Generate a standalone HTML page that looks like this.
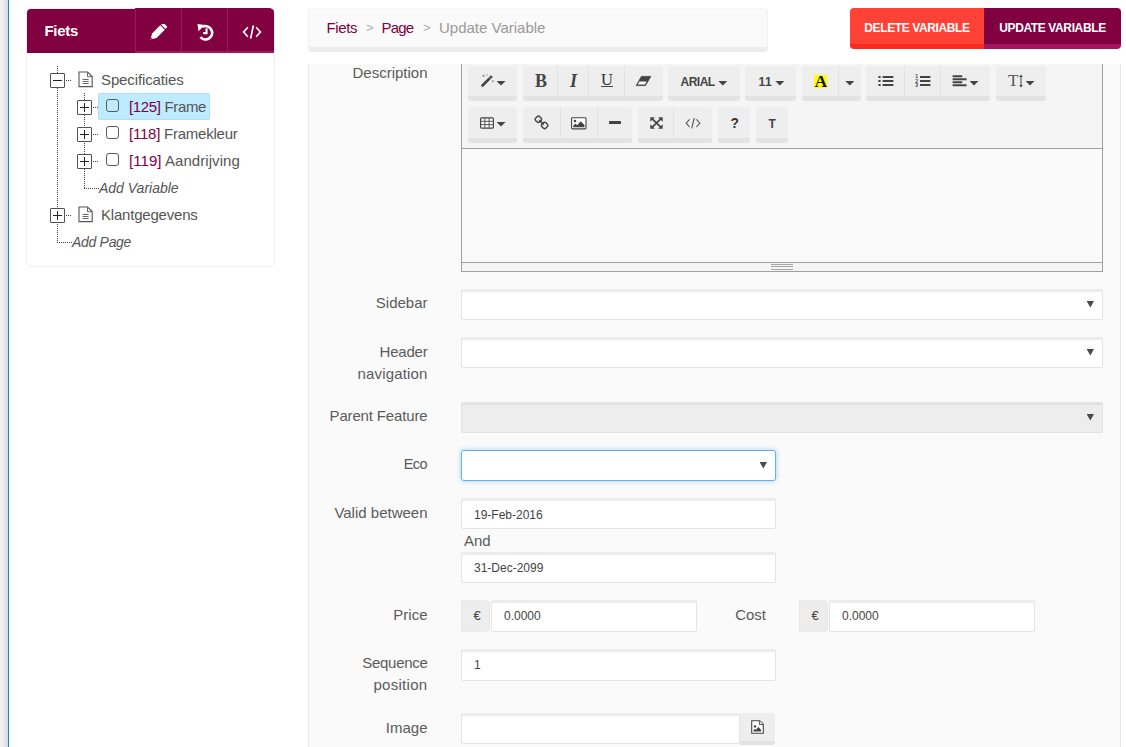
<!DOCTYPE html>
<html lang="en">
<head>
<meta charset="utf-8">
<title>Update Variable</title>
<style>
*{box-sizing:border-box;margin:0;padding:0}
html,body{width:1126px;height:747px;overflow:hidden;background:#fff}
body{font-family:"Liberation Sans",sans-serif;font-size:15px;color:#555;position:relative}
.abs{position:absolute}
#strip{left:0;top:0;width:8px;height:747px;background:linear-gradient(to right,#f2f2f2 0px,#f2f2f2 1px,#f0f0f0 1px,#f0f0f0 2px,#eeeeee 2px,#eeeeee 3px,#ebebeb 3px,#ebebeb 4px,#e6e6e6 4px,#e6e6e6 5px,#e1e1e1 5px,#e1e1e1 6px,#dddddd 6px,#dddddd 7px,#dedcda 7px,#dedcda 8px)}
#blue{left:8px;top:0;width:1px;height:747px;background:#1c83d8}

/* sidebar */
#side{left:26px;top:8px;width:249px;height:259px;background:#fff;border:1px solid #efefef;border-radius:5px}
#sidehead{left:27px;top:9px;width:247px;height:44px;background:#800040;border-radius:4px 4px 0 0}
#sidehead b{position:absolute;left:17.5px;top:13px;font-size:15px;color:#fff;letter-spacing:-0.3px}
.hbtn{top:8px;height:45px;width:47px;background:#800040;border:1px solid #a3155f;border-top-color:#800040;border-bottom-width:2px;border-right-width:0}
.hbtn svg{position:absolute}

/* tree */
.t{position:absolute;white-space:nowrap;font-size:15px;line-height:18px;color:#555}
.t i{font-style:italic}
.red{color:#800040}
.box{position:absolute;width:15px;height:15px;border:1px solid #505050;border-radius:1px;background:#fff}
.box:before{content:"";position:absolute;left:2px;top:6px;width:9px;height:1px;background:#222}
.box.plus:after{content:"";position:absolute;left:6px;top:2px;width:1px;height:9px;background:#222}
.vd{position:absolute;width:1px;background:repeating-linear-gradient(to bottom,#444 0,#444 1px,transparent 1px,transparent 2px)}
.hd{position:absolute;height:1px;background:repeating-linear-gradient(to right,#444 0,#444 1px,transparent 1px,transparent 2px)}
.cb{position:absolute;width:13px;height:13px;border:1px solid #5a5a5a;border-radius:3px;background:transparent}
#hl{left:98px;top:93px;width:112px;height:27px;background:#beebff;border:1px solid #aee0f5;border-radius:2px}

/* top */
#crumb{left:308px;top:8px;width:460px;height:44px;background:#fafafa;border:1px solid #f1f1f1;border-top-color:#f6f6f6;border-bottom:5px solid #ececec;border-radius:4px}
#crumb span{position:absolute;top:10px;margin-left:-1px;font-size:15px;line-height:18px;white-space:nowrap}
#del{left:850px;top:8px;width:134px;height:41px;background:#ff4136;border-bottom:5px solid #ff2a1b;border-radius:4px 0 0 4px}
#upd{left:984px;top:8px;width:137px;height:41px;background:#800040;border-bottom:5px solid #a8145f;border-radius:0 4px 4px 0}
.tb{color:#fff;font-weight:bold;font-size:12px;text-align:center;line-height:41px;letter-spacing:-0.38px;white-space:nowrap}

/* main */
#main{left:308px;top:64px;width:813px;height:700px;background:#fafafa;border:1px solid #ebebeb;border-top:0}
.lbl{position:absolute;left:317.5px;width:110px;text-align:right;font-size:15px;line-height:22px;color:#5a5a5a}
.inp{position:absolute;height:31px;background:#fff;border:1px solid #e4e4e4;border-top:3px solid #ececec;border-radius:2px;font-size:12px;color:#444;padding:6px 0 0 12px;line-height:17px}
.sel:after{content:"";position:absolute;right:8px;top:9px;width:7.4px;height:6.6px;background:#4a4a4a;clip-path:polygon(0 0,100% 0,50% 100%)}
.sel.eco:after{top:11px}
.addon{position:absolute;height:32px;background:#ededed;border:1px solid #e9e9e9;border-radius:0 4px 4px 0;font-size:13px;color:#444;text-align:center;line-height:29px;padding-left:3px}

/* editor */
#ed{left:461px;top:64px;width:642px;height:208px;border:1px solid #a0a0a0;border-top:0;background:#fafafa}
#edbar{left:462px;top:64px;width:640px;height:85px;background:#f5f5f5;border-bottom:1px solid #a0a0a0}
#edfoot{left:462px;top:262px;width:640px;height:9px;background:#f5f5f5;border-top:1px solid #a0a0a0}
.g{position:absolute;background:#eee;border-bottom:5px solid #e3e3e3;border-radius:3px}
.r1{top:66px;height:35px}
.r2{top:107px;height:36px}
.g s{position:absolute;top:0;width:1px;height:31px;background:#e2e2e2;text-decoration:none}
.g svg,.g span{position:absolute}
.car{width:9px;height:4.6px;background:#444;clip-path:polygon(0 0,100% 0,50% 100%)}
</style>
</head>
<body>
<div id="strip" class="abs"></div>
<div id="blue" class="abs"></div>

<!-- SIDEBAR -->
<div id="side" class="abs"></div>
<div id="sidehead" class="abs"><b>Fiets</b></div>
<div class="abs hbtn" style="left:135px"><svg style="left:13px;top:15px" width="18" height="17" viewBox="0 0 18 17"><g transform="rotate(45 8.5 8.5)"><rect x="5.3" y="-2.6" width="6.4" height="3" rx="1" fill="#fff"/><path d="M5.3 1.4h6.4v11.6l-3.2 5.4l-3.2-5.4z" fill="#fff"/><path d="M7.5 16.4h2l-1 1.8z" fill="#800040"/></g></svg></div>
<div class="abs hbtn" style="left:181px"><svg style="left:13.5px;top:12.5px" width="20" height="20" viewBox="0 0 19 19"><path d="M6.2 4.6A6.3 6.3 0 1 1 4.2 14.4" fill="none" stroke="#fff" stroke-width="2.6"/><path d="M1.4 1.8l7 1l-6 6z" fill="#fff"/><path d="M10 6v4.6h-3.2" fill="none" stroke="#fff" stroke-width="2"/></svg></div>
<div class="abs hbtn" style="left:227px;border-radius:0 5px 0 0"><svg style="left:14px;top:16px" width="21" height="15" viewBox="0 0 21 15"><path d="M5.8 2.2L1.6 7l4.2 4.8M14.2 2.2l4.2 4.8l-4.2 4.8M11.4 0.4L8.6 13.6" fill="none" stroke="#fff" stroke-width="1.7"/></svg></div>

<div id="hl" class="abs"></div>

<!-- tree lines -->
<div class="vd" style="left:57px;top:66px;height:176px"></div>
<div class="hd" style="left:66px;top:80px;width:6px"></div>
<div class="hd" style="left:66px;top:215px;width:6px"></div>
<div class="hd" style="left:57px;top:242px;width:15px"></div>
<div class="vd" style="left:84px;top:93px;height:96px"></div>
<div class="hd" style="left:93px;top:107px;width:5px"></div>
<div class="hd" style="left:93px;top:134px;width:5px"></div>
<div class="hd" style="left:93px;top:161px;width:5px"></div>
<div class="hd" style="left:84px;top:188px;width:15px"></div>
<!-- expanders -->
<div class="box" style="left:50px;top:73px"></div>
<div class="box plus" style="left:50px;top:208px"></div>
<div class="box plus" style="left:77px;top:100px"></div>
<div class="box plus" style="left:77px;top:127px"></div>
<div class="box plus" style="left:77px;top:154px"></div>
<!-- page icons -->
<svg class="abs" style="left:78px;top:71px" width="16" height="17" viewBox="0 0 16 17"><path d="M1 1h8.6l4.6 4.6V15.6H1z" fill="#fff" stroke="#555" stroke-width="1.1"/><path d="M9.5 1.2v4.5h4.5" fill="none" stroke="#666" stroke-width="1"/><path d="M4.6 8.5h6M4.6 10.5h6M4.6 12.5h6" stroke="#666" stroke-width="1"/></svg>
<svg class="abs" style="left:78px;top:206px" width="16" height="17" viewBox="0 0 16 17"><path d="M1 1h8.6l4.6 4.6V15.6H1z" fill="#fff" stroke="#555" stroke-width="1.1"/><path d="M9.5 1.2v4.5h4.5" fill="none" stroke="#666" stroke-width="1"/><path d="M4.6 8.5h6M4.6 10.5h6M4.6 12.5h6" stroke="#666" stroke-width="1"/></svg>
<!-- checkboxes -->
<div class="cb" style="left:106px;top:99px"></div>
<div class="cb" style="left:106px;top:126px"></div>
<div class="cb" style="left:106px;top:153px"></div>
<!-- labels -->
<div class="t" style="left:101px;top:71px;letter-spacing:-0.12px">Specificaties</div>
<div class="t" style="left:129px;top:98px;letter-spacing:-0.35px"><span class="red">[125]</span> Frame</div>
<div class="t" style="left:129px;top:125px;letter-spacing:-0.23px"><span class="red">[118]</span> Framekleur</div>
<div class="t" style="left:129px;top:152px;letter-spacing:0.06px"><span class="red">[119]</span> Aandrijving</div>
<div class="t" style="left:99px;top:179px;font-size:14px"><i>Add Variable</i></div>
<div class="t" style="left:101px;top:206px;letter-spacing:-0.2px">Klantgegevens</div>
<div class="t" style="left:72px;top:233px;font-size:14px;letter-spacing:-0.3px"><i>Add Page</i></div>


<!-- TOP -->
<div id="crumb" class="abs">
<span class="red" style="left:18.5px;letter-spacing:-0.35px">Fiets</span><span style="left:58px;color:#aaa;font-size:13px">&gt;</span><span class="red" style="left:73.5px;letter-spacing:-0.8px">Page</span><span style="left:115px;color:#aaa;font-size:13px">&gt;</span><span style="left:131px;color:#999">Update Variable</span>
</div>
<div id="del" class="abs tb">DELETE VARIABLE</div>
<div id="upd" class="abs tb">UPDATE VARIABLE</div>

<!-- MAIN -->
<div id="main" class="abs"></div>

<!-- labels -->
<div class="lbl" style="top:62px">Description</div>
<div class="lbl" style="top:292px">Sidebar</div>
<div class="lbl" style="top:341px"><span style="letter-spacing:-0.2px">Header</span><br><span style="letter-spacing:0.15px">navigation</span></div>
<div class="lbl" style="top:405px;letter-spacing:-0.15px">Parent Feature</div>
<div class="lbl" style="top:453px;letter-spacing:-0.6px;font-size:14.5px">Eco&#8202;</div>
<div class="lbl" style="top:502px">Valid between</div>
<div class="lbl" style="top:604px">Price</div>
<div class="lbl" style="top:652px"><span style="letter-spacing:-0.3px">Sequence</span><br><span style="letter-spacing:0.3px">position</span></div>
<div class="lbl" style="top:717px">Image</div>
<div class="lbl" style="top:604px;left:700px;width:66px">Cost</div>
<div class="lbl" style="top:530px;left:464px;width:auto">And</div>

<!-- editor -->
<div id="ed" class="abs"></div>
<div id="edbar" class="abs"></div>
<div id="edfoot" class="abs"><div style="position:absolute;left:309px;top:1px;width:22px;height:6px;background:linear-gradient(to bottom,#a6a6a6 0,#a6a6a6 1px,transparent 1px,transparent 2px,#a6a6a6 2px,#a6a6a6 3px,transparent 3px,transparent 5px,#a6a6a6 5px,#a6a6a6 6px)"></div></div>
<div class="g r1" style="left:468px;width:49px"><!--wand--></div>
<div class="g r1" style="left:523px;width:140px"><s style="left:34px"></s><s style="left:65px"></s><s style="left:101px"></s><!--biu--></div>
<div class="g r1" style="left:668px;width:72px"><!--arial--></div>
<div class="g r1" style="left:745px;width:51px"><!--11--></div>
<div class="g r1" style="left:802px;width:59px"><s style="left:36px"></s><!--color--></div>
<div class="g r1" style="left:866px;width:124px"><s style="left:38px"></s><s style="left:74px"></s><!--lists--></div>
<div class="g r1" style="left:996px;width:50px"><!--height--></div>
<div class="g r2" style="left:468px;width:49px"><!--table--></div>
<div class="g r2" style="left:523px;width:109px"><s style="left:37px"></s><s style="left:74px"></s><!--link--></div>
<div class="g r2" style="left:638px;width:74px"><s style="left:35px"></s><!--full--></div>
<div class="g r2" style="left:718px;width:32px"><!--help--></div>
<div class="g r2" style="left:756px;width:32px"><!--T--></div>



<!-- toolbar icons (absolute page coords) -->
<!-- magic wand -->
<svg class="abs" style="left:480px;top:73.5px" width="14" height="14" viewBox="0 0 14 14"><path d="M0.8 11.3L10.9 1.2l1.9 1.9L2.7 13.2z" fill="#444"/><path d="M9.4 3.1l1.6 1.6" stroke="#ddd" stroke-width="0.7"/><path d="M3.6 0.8v2.2M2.5 1.9h2.2M7 0.3v1.4M12.8 6.4v1.6M12 7.2h1.6" stroke="#777" stroke-width="0.8"/></svg>
<div class="car abs" style="left:496.5px;top:81px"></div>
<!-- B I U -->
<span class="abs" style="left:535px;top:71px;font:bold 18px/20px 'Liberation Serif',serif;color:#444">B</span>
<span class="abs" style="left:570px;top:71px;font:italic bold 18px/20px 'Liberation Serif',serif;color:#444">I</span>
<span class="abs" style="left:601px;top:70px;font:16.5px/20px 'Liberation Serif',serif;color:#333">U</span>
<div class="abs" style="left:601px;top:86px;width:12px;height:1px;background:#444"></div>
<!-- eraser -->
<svg class="abs" style="left:635px;top:75px" width="17" height="12" viewBox="0 0 17 12"><path d="M6.4 1.4h9.4L10.4 10.6H1.2z" fill="#444" stroke="#444" stroke-width="0.8" stroke-linejoin="round"/><path d="M4.4 6.6h7.2L9.9 9.6H2.7z" fill="#fff"/></svg>
<!-- ARIAL / 11 -->
<span class="abs" style="left:680.5px;top:73px;font:bold 12px/18px 'Liberation Sans',sans-serif;color:#444;letter-spacing:-0.5px">ARIAL</span>
<div class="car abs" style="left:718.3px;top:81px"></div>
<span class="abs" style="left:758.4px;top:73px;font:bold 12px/18px 'Liberation Sans',sans-serif;color:#444;letter-spacing:0.5px">11</span>
<div class="car abs" style="left:775.3px;top:81px"></div>
<!-- color -->
<div class="abs" style="left:814px;top:75px;width:13px;height:13px;background:#ffff00"></div>
<span class="abs" style="left:814.5px;top:72px;font:bold 17.5px/18px 'Liberation Serif',serif;color:#111">A</span>
<div class="car abs" style="left:845.3px;top:81px"></div>
<!-- ul -->
<svg class="abs" style="left:878px;top:75px" width="16" height="12" viewBox="0 0 16 12"><path d="M4.6 2h10.8M4.6 6h10.8M4.6 10h10.8" stroke="#444" stroke-width="2"/><path d="M0.4 2h2.2M0.4 6h2.2M0.4 10h2.2" stroke="#444" stroke-width="2"/></svg>
<!-- ol -->
<svg class="abs" style="left:915px;top:74px" width="16" height="14" viewBox="0 0 16 14"><path d="M5 3h10.4M5 7h10.4M5 11h10.4" stroke="#444" stroke-width="2"/><text x="0.3" y="4.4" font-family="Liberation Sans, sans-serif" font-size="5" font-weight="bold" fill="#444">1</text><text x="0.3" y="8.8" font-family="Liberation Sans, sans-serif" font-size="5" font-weight="bold" fill="#444">2</text><text x="0.3" y="13.2" font-family="Liberation Sans, sans-serif" font-size="5" font-weight="bold" fill="#444">3</text></svg>
<!-- align -->
<svg class="abs" style="left:952px;top:75px" width="15" height="12" viewBox="0 0 15 12"><path d="M0.6 1.2h9.6M0.6 4.2h14M0.6 7.2h9.6M0.6 10.2h14" stroke="#444" stroke-width="1.9"/></svg>
<div class="car abs" style="left:969.5px;top:81px"></div>
<!-- line height -->
<span class="abs" style="left:1008px;top:71px;font:17px/20px 'Liberation Serif',serif;color:#555">T</span>
<svg class="abs" style="left:1018px;top:74px" width="6" height="14" viewBox="0 0 6 14"><path d="M3 2v10" stroke="#555" stroke-width="1.1"/><path d="M3 0.6l1.8 2.4h-3.6zM3 13.4l1.8-2.4h-3.6z" fill="#444"/></svg>
<div class="car abs" style="left:1025.5px;top:81px"></div>
<!-- table -->
<svg class="abs" style="left:480px;top:116.5px" width="14" height="12" viewBox="0 0 14 12"><rect x="0.6" y="0.9" width="12.8" height="10.2" rx="1" fill="#fff" stroke="#444" stroke-width="1.2"/><path d="M0.6 4.3h12.8M0.6 7.6h12.8M4.9 1v10.2M9.1 1v10.2" stroke="#555" stroke-width="1"/></svg>
<div class="car abs" style="left:496.5px;top:122px"></div>
<!-- link -->
<svg class="abs" style="left:534px;top:115px" width="15" height="15" viewBox="0 0 15 15"><g fill="none" stroke="#444" stroke-width="1.4"><rect x="-2.8" y="-2.8" width="5.6" height="5.6" rx="2" transform="translate(4.4 4.3) rotate(45)"/><rect x="-2.8" y="-2.8" width="5.6" height="5.6" rx="2" transform="translate(10.6 10.4) rotate(45)"/><path d="M5.2 5.1l4.6 4.5" stroke-width="1.6"/></g></svg>
<!-- picture -->
<svg class="abs" style="left:571px;top:116.5px" width="16" height="13" viewBox="0 0 16 13"><rect x="0.6" y="0.7" width="14.4" height="11.2" rx="0.8" fill="#fff" stroke="#444" stroke-width="1.1"/><circle cx="4" cy="4" r="1.3" fill="#444"/><path d="M2.2 10.2V8.8l2.3-2.2l1.6 1.6l3.6-4l3.8 3.8v2.2z" fill="#444"/></svg>
<!-- minus -->
<div class="abs" style="left:609px;top:121px;width:12px;height:3px;background:#444;border-radius:0.5px"></div>
<!-- fullscreen -->
<svg class="abs" style="left:650px;top:117px" width="13" height="12" viewBox="0 0 13 12"><path d="M2 1.6l9 8.8M11 1.6l-9 8.8" stroke="#444" stroke-width="1.7"/><path d="M0.3 0.2h4.6L0.3 4.8zM12.7 0.2H8.1l4.6 4.6zM0.3 11.8h4.6L0.3 7.2zM12.7 11.8H8.1l4.6-4.6z" fill="#444"/></svg>
<!-- code -->
<svg class="abs" style="left:685px;top:117px" width="16" height="12" viewBox="0 0 16 12"><path d="M4.6 2.4L1.2 6.2l3.4 3.8M11.4 2.4l3.4 3.8l-3.4 3.8M9.3 1L6.7 11.4" fill="none" stroke="#555" stroke-width="1.1"/></svg>
<!-- help / T -->
<span class="abs" style="left:730.5px;top:115px;font:bold 13.8px/18px 'Liberation Sans',sans-serif;color:#333">?</span>
<span class="abs" style="left:768.5px;top:114.5px;font:bold 12px/18px 'Liberation Sans',sans-serif;color:#444">T</span>

<!-- inputs -->
<div class="inp sel" style="left:461px;top:289px;width:642px"></div>
<div class="inp sel" style="left:461px;top:337px;width:642px"></div>
<div class="inp sel" style="left:461px;top:402px;width:642px;background:#ededed;border-color:#e2e2e2;border-top-color:#e2e2e2"></div>
<div class="inp sel eco" style="left:461px;top:450px;width:315px;border:1px solid #66afe9;box-shadow:0 0 5px rgba(102,175,233,.6);border-radius:3px"></div>
<div class="inp" style="left:461px;top:498px;width:315px">19-Feb-2016</div>
<div class="inp" style="left:461px;top:552px;width:315px;padding-top:5px">31-Dec-2099</div>
<div class="addon" style="left:461px;top:600px;width:29px">&euro;</div>
<div class="inp" style="left:491px;top:600px;width:206px;height:32px;padding-top:5px">0.0000</div>
<div class="addon" style="left:799px;top:600px;width:29px">&euro;</div>
<div class="inp" style="left:829px;top:600px;width:206px;height:32px;padding-top:5px">0.0000</div>
<div class="inp" style="left:461px;top:649px;width:315px;height:32px;padding-top:5px">1</div>
<div class="inp" style="left:461px;top:713px;width:279px"></div>
<div class="abs" style="left:740px;top:713px;width:35px;height:31.5px;background:#eee;border-bottom:4px solid #e3e3e3;border-radius:0 3px 3px 0"></div>
<svg class="abs" style="left:751px;top:720px" width="13" height="14" viewBox="0 0 13 14"><path d="M0.7 0.7h8l3.6 3.6v9H0.7z" fill="#fff" stroke="#444" stroke-width="1.1"/><path d="M8.4 0.8v3.8h3.8" fill="#eee" stroke="#444" stroke-width="0.9"/><circle cx="4" cy="6.4" r="1.2" fill="#444"/><path d="M2.4 11.6v-1.2l1.6-1.6l1 1l2.4-2.8l2.6 2.8v1.8z" fill="#444"/></svg>

</body>
</html>
